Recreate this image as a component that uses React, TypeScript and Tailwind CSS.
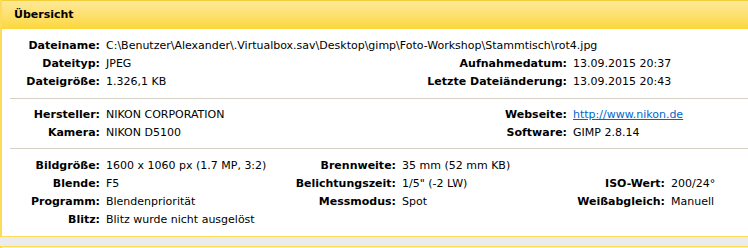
const font = { fontFamily: '"DejaVu Sans", Verdana, sans-serif' };

function Label({ children }: { children: React.ReactNode }) {
  return <div className="text-right font-bold whitespace-nowrap">{children}</div>;
}

function Value({ children, className = "" }: { children?: React.ReactNode; className?: string }) {
  return <div className={"whitespace-nowrap " + className}>{children}</div>;
}

function Separator() {
  return <div className="ml-[8px] h-px bg-[#d6d3c6]" />;
}

export default function App() {
  return (
    <div className="w-[748px] h-[248px] overflow-hidden bg-[#ececec] text-[11px] text-black" style={font}>
      <div className="w-[760px] bg-white border-l-2 border-b border-[#fddc5a]">
        <div className="h-[29px] border-t border-[#f4cf3a] bg-gradient-to-b from-[#fee996] to-[#fcd736] pl-[12px] flex items-center font-bold text-[11px]">
          Übersicht
        </div>

        <div className="pt-2 pb-[7px] grid grid-cols-[98px_300px_155px_auto] gap-x-[6px] auto-rows-[18px] items-center">
          <Label>Dateiname:</Label>
          <Value className="col-span-3">
            C:\Benutzer\Alexander\.Virtualbox.sav\Desktop\gimp\Foto-Workshop\Stammtisch\rot4.jpg
          </Value>
          <Label>Dateityp:</Label>
          <Value>JPEG</Value>
          <Label>Aufnahmedatum:</Label>
          <Value>13.09.2015 20:37</Value>
          <Label>Dateigröße:</Label>
          <Value>1.326,1 KB</Value>
          <Label>Letzte Dateiänderung:</Label>
          <Value>13.09.2015 20:43</Value>
        </div>

        <Separator />

        <div className="pt-[7px] pb-[6px] grid grid-cols-[98px_300px_155px_auto] gap-x-[6px] auto-rows-[18px] items-center">
          <Label>Hersteller:</Label>
          <Value>NIKON CORPORATION</Value>
          <Label>Webseite:</Label>
          <Value className="text-[#0066cc] underline">http://www.nikon.de</Value>
          <Label>Kamera:</Label>
          <Value>NIKON D5100</Value>
          <Label>Software:</Label>
          <Value>GIMP 2.8.14</Value>
        </div>

        <Separator />

        <div className="pt-2 pb-[7px] grid grid-cols-[98px_174px_110px_158px_99px_auto] gap-x-[6px] auto-rows-[18px] items-center">
          <Label>Bildgröße:</Label>
          <Value>1600 x 1060 px (1.7 MP, 3:2)</Value>
          <Label>Brennweite:</Label>
          <Value>35 mm (52 mm KB)</Value>
          <div />
          <div />

          <Label>Blende:</Label>
          <Value>F5</Value>
          <Label>Belichtungszeit:</Label>
          <Value>1/5" (-2 LW)</Value>
          <Label>ISO-Wert:</Label>
          <Value>200/24°</Value>

          <Label>Programm:</Label>
          <Value>Blendenpriorität</Value>
          <Label>Messmodus:</Label>
          <Value>Spot</Value>
          <Label>Weißabgleich:</Label>
          <Value>Manuell</Value>

          <Label>Blitz:</Label>
          <Value className="col-span-5">Blitz wurde nicht ausgelöst</Value>
        </div>
      </div>

      <div className="mt-[9px] w-[760px] h-[20px] border-t border-l-2 border-[#fddc5a] bg-gradient-to-b from-[#fef3c0] to-[#fee996]" />
    </div>
  );
}
